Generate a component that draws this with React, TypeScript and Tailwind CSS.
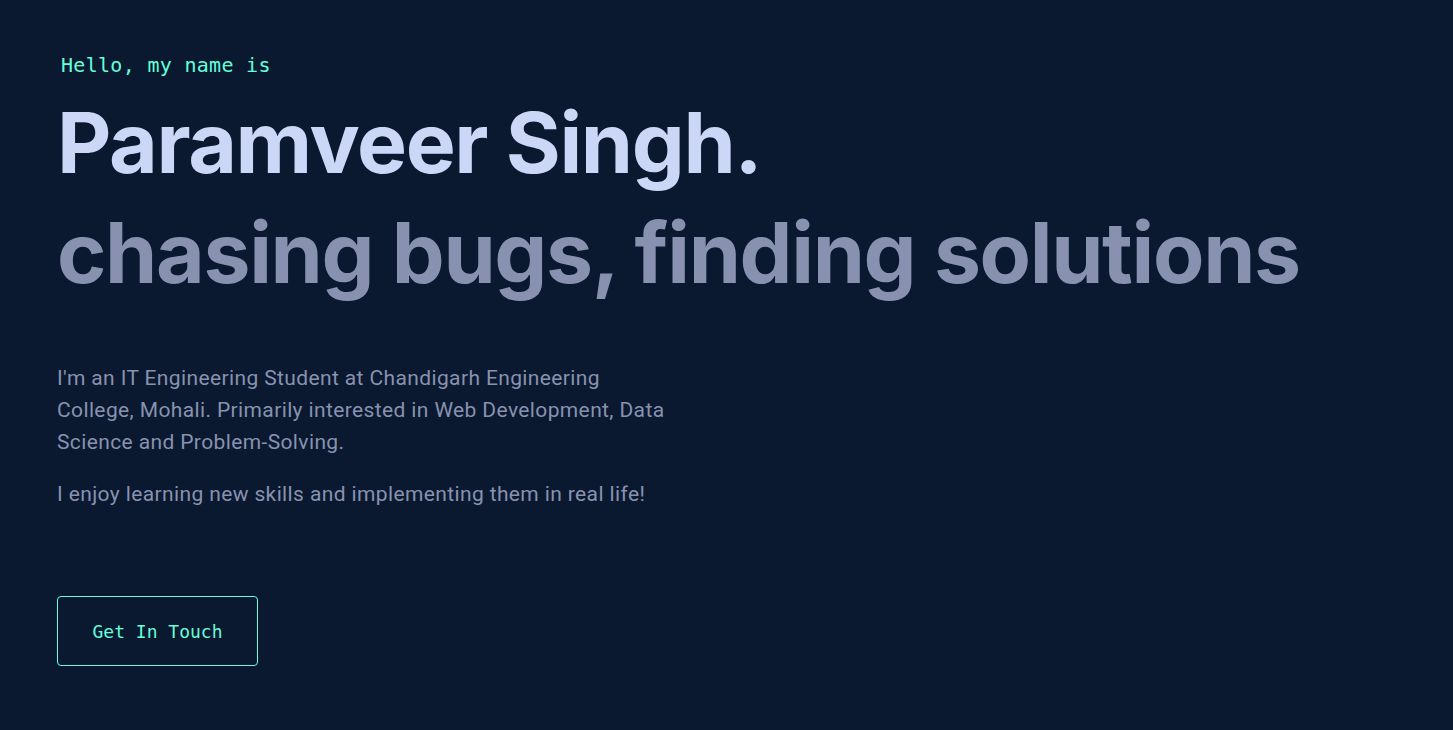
export default function App() {
  return (
    <div className="min-h-screen w-full bg-[#0a192f] overflow-hidden">
      <section className="pl-[57px] pt-[51px]">
        <p className="ml-1 font-['DejaVu_Sans_Mono',monospace] text-[20px] leading-[28px] tracking-[0.3px] text-[#64ffda]">
          Hello, my name is
        </p>
        <h1 className="mt-[14px] font-['Inter',sans-serif] font-bold text-[84px] leading-[100px] tracking-[-0.016em] text-[#ccd6f6]">
          Paramveer Singh.
        </h1>
        <h2 className="mt-[10px] font-['Inter',sans-serif] font-bold text-[84px] leading-[100px] tracking-[-0.016em] text-[#8892b0]">
          chasing bugs, finding solutions
        </h2>
        <div className="mt-[59px] max-w-[615px] font-['Roboto',sans-serif] text-[21px] leading-[32px] tracking-[0.018em] text-[#8892b0]">
          <p>
            I'm an IT Engineering Student at Chandigarh Engineering College, Mohali. Primarily interested in Web
            Development, Data Science and Problem-Solving.
          </p>
          <p className="mt-[20px]">I enjoy learning new skills and implementing them in real life!</p>
        </div>
        <button className="mt-[86px] h-[70px] w-[201px] rounded border border-[#64ffda] font-['DejaVu_Sans_Mono',monospace] text-[18px] text-[#64ffda]">
          Get In Touch
        </button>
      </section>
    </div>
  )
}
